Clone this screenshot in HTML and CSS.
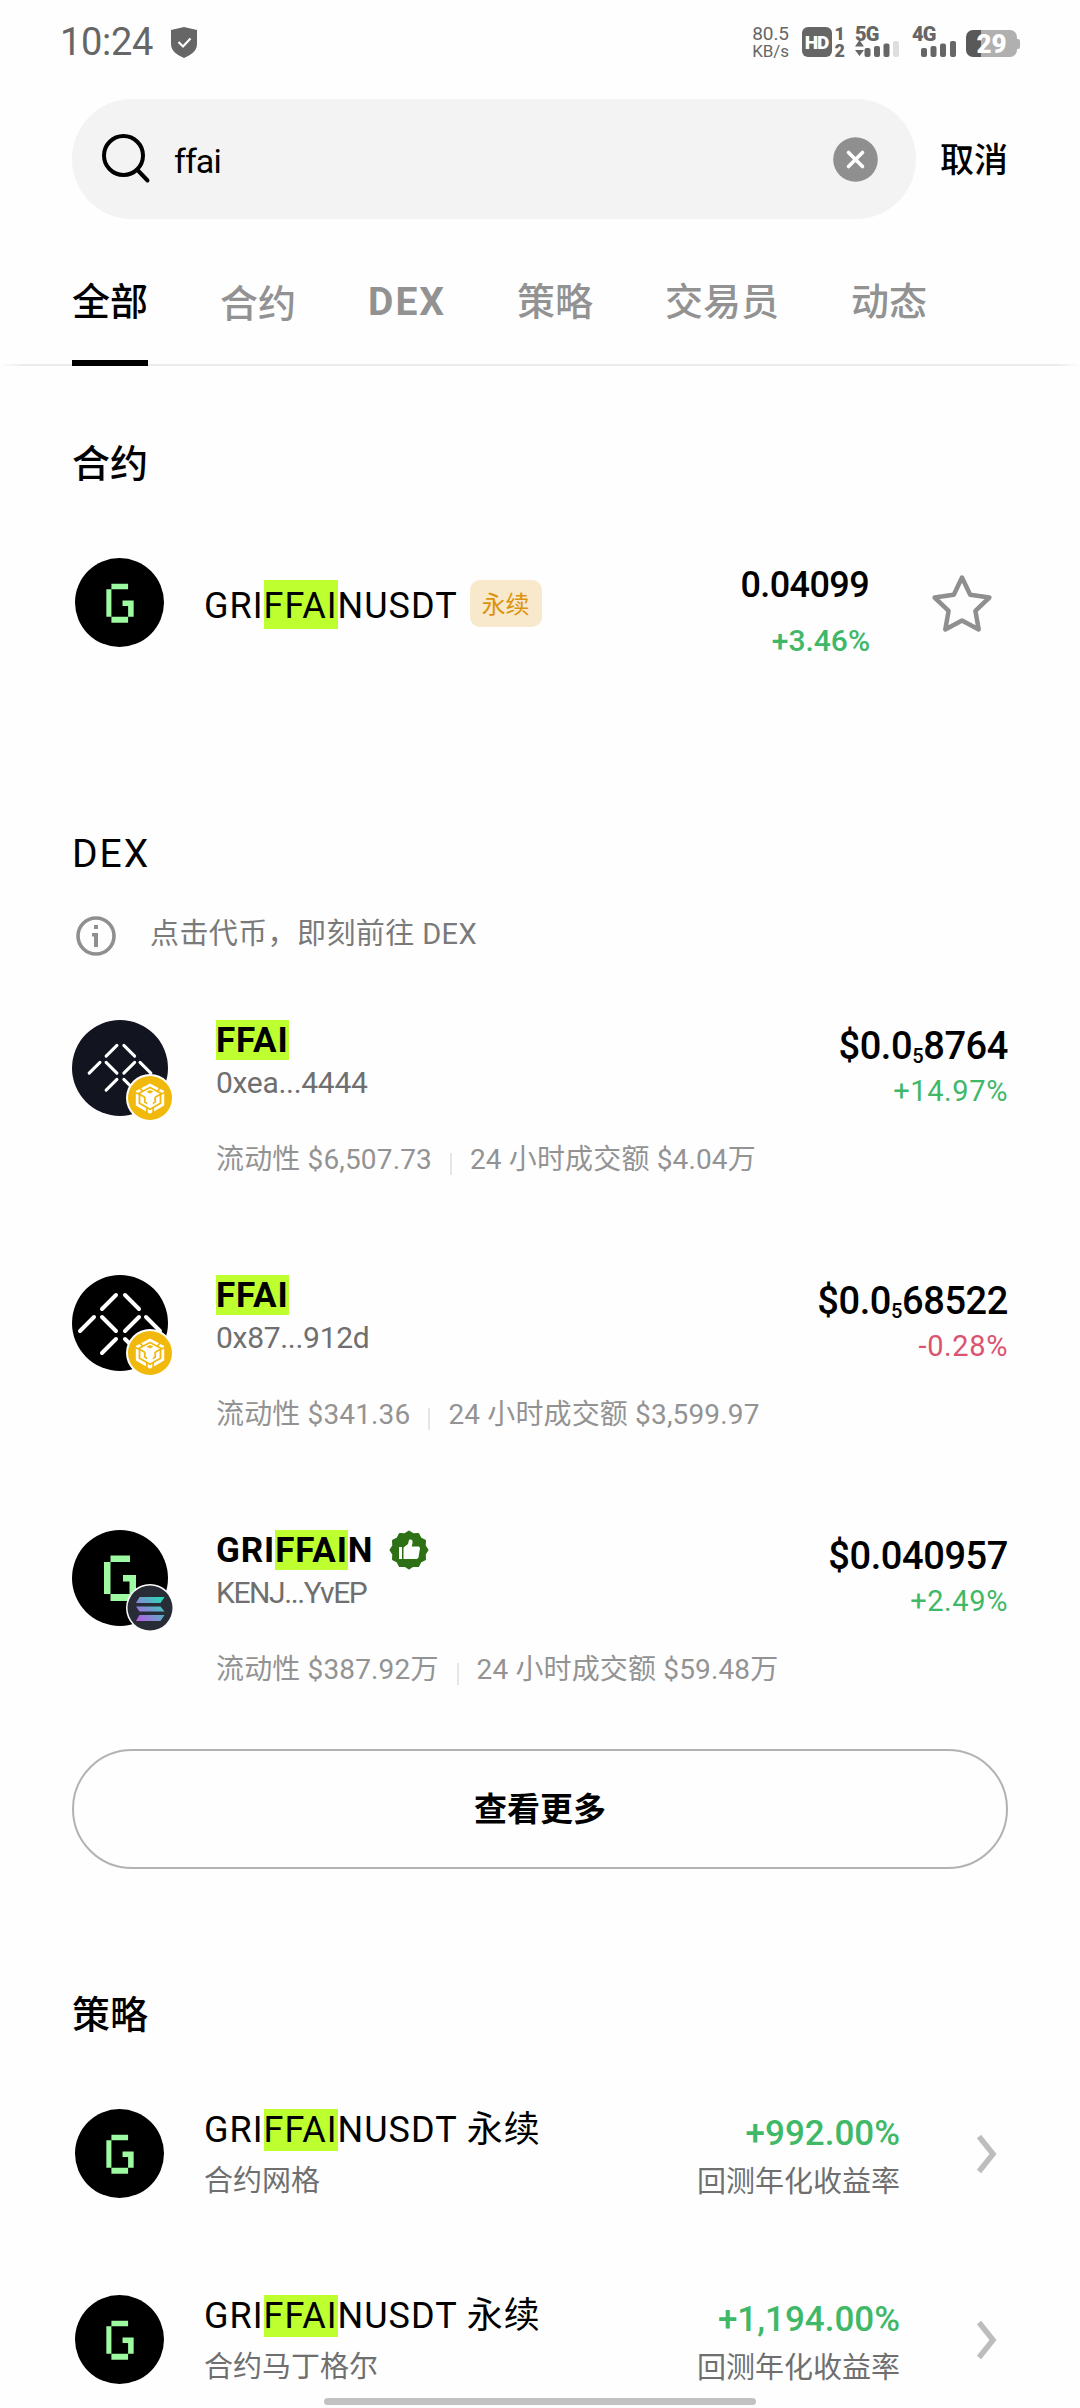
FILE: index.html
```html
<!DOCTYPE html>
<html lang="zh-CN">
<head>
<meta charset="utf-8">
<title>搜索</title>
<link rel="stylesheet" href="styles.css">
</head>
<body>
<svg width="0" height="0" class="defs">
  <defs>
    <linearGradient id="solana" gradientUnits="userSpaceOnUse" x1="11" y1="36" x2="36" y2="12">
      <stop offset="0" stop-color="#b65ce6"/>
      <stop offset="0.5" stop-color="#6f9ccb"/>
      <stop offset="1" stop-color="#22e0b4"/>
    </linearGradient>
    <symbol id="griffain" viewBox="0 0 88 88">
      <circle cx="44" cy="44" r="44" fill="#000"/>
      <path fill="#9dfaa0" d="M36 25.500h16.500v5.500H36zM31 31h5v27h-5zM36 58h16.500v6H36zM47 42h11v16h-5.500V47.500H47z"/>
    </symbol>
    <symbol id="ff" viewBox="0 0 96 96">
      <path fill="none" stroke="#fff" stroke-width="4" stroke-linecap="round" d="M44 20L30 34M53 20l14 14M22 42L8 56M30 42l14 14M67 42L53 56M74 42l14 14M44 64L30 78M53 64l14 14"/>
    </symbol>
    <symbol id="bnb" viewBox="0 0 48 48">
      <circle cx="24" cy="24" r="24" fill="#fff"/>
      <circle cx="24" cy="24" r="22" fill="#f0b90b"/>
      <path fill="#fff" d="M24 9.500L38.200 17v14.500L24 39.800 9.800 31.500V17z"/>
      <g fill="none" stroke="#f0b90b" stroke-width="1.800">
        <path d="M24 13.500L34.500 19v10.300L24 35.300l-10.500-6V19z"/>
        <path d="M9 18.500l5 2 4.800 2.800v4.700l5.200 3M39 18.500l-5 2-4.800 2.800v4.700l-5.200 3"/>
        <path d="M13 13l4 4.500M35 13l-4 4.500M20.800 33v7M27.200 33v7"/>
      </g>
      <path fill="#f0b90b" d="M24 16l3.500 1.800-3.500 1.800-3.500-1.800z"/>
      <path fill="#fff" d="M19.500 20l4.500 2 4.500-2 1.500 1.500-3.200 2.500v8.500L24 34l-2.800-1.500V24L18 21.500z"/>
    </symbol>
    <symbol id="sol" viewBox="0 0 48 48">
      <circle cx="24" cy="24" r="24" fill="#fff"/>
      <circle cx="24" cy="24" r="22.500" fill="#282c37"/>
      <path fill="url(#solana)" d="M13.500 13h25l-4 6h-24.500zM10 22.500h24.500l4 5H13.500zM13.500 31h25l-4 6h-24.500z"/>
    </symbol>
    <symbol id="chevron" viewBox="0 0 24 40">
      <path d="M4 2.500L18 20 4 37.500" fill="none" stroke="#bdbdbd" stroke-width="5.500"/>
    </symbol>
  </defs>
</svg>

<header class="status">
  <span class="clock">10:24</span>
  <svg class="shield" width="26" height="31" viewBox="0 0 26 31"><path d="M13 0l13 3v14c0 7-6 11-13 14C6 28 0 24 0 17V3z" fill="#666"/><path d="M7.500 15l4.500 4.500 7.500-8" fill="none" stroke="#fff" stroke-width="2.200"/></svg>
  <div class="rate"><span>80.5</span><span>KB/s</span></div>
  <div class="hd"><span class="hd-box">HD</span><span class="sims"><b>1</b><b>2</b></span></div>
  <div class="signal signal-5g">
    <b>5G</b>
    <svg width="44" height="17" viewBox="0 0 44 17" fill="#666"><path d="M4.500 0l4.500 6.500H0zM4.500 16l4.500-6H0z"/><rect x="9.500" y="8" width="6" height="9" rx="2"/><rect x="19" y="6" width="6" height="11" rx="2"/><rect x="28.500" y="3.500" width="6" height="13.500" rx="2"/><rect x="38" y="1" width="6" height="16" rx="2" fill="#dedede"/></svg>
  </div>
  <div class="signal signal-4g">
    <b>4G</b>
    <svg width="44" height="17" viewBox="0 0 44 17" fill="#666"><rect x="9" y="8" width="6" height="9" rx="2"/><rect x="18.500" y="6" width="6" height="11" rx="2"/><rect x="28" y="3.500" width="6" height="13.500" rx="2"/><rect x="38" y="1" width="6" height="16" rx="2"/></svg>
  </div>
  <div class="battery"><span>29</span></div>
</header>

<div class="search">
  <div class="field">
    <svg width="50" height="50" viewBox="0 0 50 50" fill="none" stroke="#000" stroke-width="4" stroke-linecap="round"><circle cx="21.500" cy="21.500" r="19.500"/><path d="M35.500 36l10 10.500"/></svg>
    <span class="query">ffai</span>
    <svg class="clear" width="45" height="45" viewBox="0 0 45 45"><circle cx="22.500" cy="22.500" r="22.300" fill="#8f8f8f"/><path d="M15.500 15.500l14 14M29.500 15.500l-14 14" stroke="#fff" stroke-width="3.600" stroke-linecap="round"/></svg>
  </div>
  <span class="cancel">取消</span>
</div>

<nav class="tabs">
  <span class="tab active">全部</span>
  <span class="tab tab-low">合约</span>
  <span class="tab tab-dex">DEX</span>
  <span class="tab">策略</span>
  <span class="tab">交易员</span>
  <span class="tab">动态</span>
</nav>

<main>
  <section class="futures">
    <h2>合约</h2>
    <div class="pair">
      <svg class="coin" width="89" height="89"><use href="#griffain"/></svg>
      <span class="symbol">GRI<mark>FFAI</mark>NUSDT</span>
      <span class="badge">永续</span>
      <div class="quote"><span class="last">0.04099</span><span class="change up">+3.46%</span></div>
      <svg class="star" width="64" height="60" viewBox="0 0 64 60"><path d="M32 4.500l8.200 17.300 19.200 2.700-14 13.300 3.300 18.700L32 47.500 15.300 56.500l3.300-18.700-14-13.300 19.200-2.700z" fill="none" stroke="#8f8f8f" stroke-width="4.500" stroke-linejoin="round"/></svg>
    </div>
  </section>

  <section class="dex">
    <h2 class="latin">DEX</h2>
    <div class="hint">
      <svg width="40" height="40" viewBox="0 0 40 40"><circle cx="20" cy="20" r="18" fill="none" stroke="#8f8f8f" stroke-width="3.600"/><path d="M18 9h4v4h-4zM16 17h6v14h-4V20.500h-2z" fill="#8f8f8f"/></svg>
      <span>点击代币，即刻前往 DEX</span>
    </div>

    <div class="token">
      <div class="logo logo-navy"><svg class="mark-small" width="74" height="74"><use href="#ff"/></svg><svg class="chain" width="48" height="48"><use href="#bnb"/></svg></div>
      <div class="info">
        <div class="name"><mark>FFAI</mark></div>
        <div class="address">0xea...4444</div>
        <div class="stats"><span>流动性 $6,507.73</span><i></i><span>24 小时成交额 $4.04万</span></div>
      </div>
      <div class="price"><span class="usd">$0.0<small>5</small>8764</span><span class="up">+14.97%</span></div>
    </div>

    <div class="token">
      <div class="logo"><svg width="96" height="96"><use href="#ff"/></svg><svg class="chain" width="48" height="48"><use href="#bnb"/></svg></div>
      <div class="info">
        <div class="name"><mark>FFAI</mark></div>
        <div class="address">0x87...912d</div>
        <div class="stats"><span>流动性 $341.36</span><i></i><span>24 小时成交额 $3,599.97</span></div>
      </div>
      <div class="price"><span class="usd">$0.0<small>5</small>68522</span><span class="down">-0.28%</span></div>
    </div>

    <div class="token">
      <div class="logo"><svg width="96" height="96" viewBox="0 0 96 96" fill="#9dfaa0"><path d="M38.500 25.500H58V32H38.500zM32 32h6.500v32H32zM38.500 64H58v7H38.500zM51 45h13v19h-6.500V51.500H51z"/></svg><svg class="chain" width="48" height="48"><use href="#sol"/></svg></div>
      <div class="info">
        <div class="name">GRI<mark>FFAI</mark>N<svg class="liked" width="40" height="40" viewBox="0 0 40 40"><path fill="#2d7016" stroke="#2d7016" stroke-width="2" stroke-linejoin="round" d="M20 1.500L24.220 4.260 29.250 4 31.530 8.470 36 10.750 35.740 15.780 38.500 20 35.740 24.220 36 29.250 31.530 31.530 29.250 36 24.220 35.740 20 38.500 15.780 35.740 10.750 36 8.470 31.530 4 29.250 4.260 24.220 1.500 20 4.260 15.780 4 10.750 8.470 8.470 10.750 4 15.780 4.260z"/><path fill="#fff" d="M10 17h3v12h-3zM14.500 17.500L19 14l1-4c2.500-1.200 4 .3 3.500 3l-.8 3.500H30l1 1.500-1.500 9.500-1.500 1.500H14.500z"/></svg></div>
        <div class="address address-tight">KENJ...YvEP</div>
        <div class="stats"><span>流动性 $387.92万</span><i></i><span>24 小时成交额 $59.48万</span></div>
      </div>
      <div class="price"><span class="usd">$0.040957</span><span class="up">+2.49%</span></div>
    </div>

    <div class="more">查看更多</div>
  </section>

  <section class="strategies">
    <h2>策略</h2>
    <div class="strategy">
      <svg class="coin" width="89" height="89"><use href="#griffain"/></svg>
      <div class="what"><span class="symbol">GRI<mark>FFAI</mark>NUSDT 永续</span><span class="kind">合约网格</span></div>
      <div class="yield"><span class="up">+992.00%</span><span class="kind">回测年化收益率</span></div>
      <svg class="go" width="24" height="40"><use href="#chevron"/></svg>
    </div>
    <div class="strategy">
      <svg class="coin" width="89" height="89"><use href="#griffain"/></svg>
      <div class="what"><span class="symbol">GRI<mark>FFAI</mark>NUSDT 永续</span><span class="kind">合约马丁格尔</span></div>
      <div class="yield"><span class="up">+1,194.00%</span><span class="kind">回测年化收益率</span></div>
      <svg class="go" width="24" height="40"><use href="#chevron"/></svg>
    </div>
  </section>
</main>
<div class="home-bar"></div>
</body>
</html>
```

FILE: styles.css
```css
* { box-sizing: border-box; }

body {
  position: relative;
  width: 1080px;
  height: 2408px;
  margin: 0;
  overflow: hidden;
  background: #fefefe;
  color: #000;
  font-family: Roboto, "Noto Sans CJK SC", sans-serif;
  white-space: nowrap;
}

svg { display: block; flex: none; }
.defs { position: absolute; }
mark { background: #bdff2f; color: inherit; }
.up { color: #3fb868; }
.down { color: #da5470; }

/* Status bar */
.status {
  display: flex;
  align-items: flex-start;
  height: 99px;
  padding: 27px 60px 0 60px;
  color: #666;
}
.clock { width: 94px; font-size: 38px; line-height: 31px; letter-spacing: -0.3px; }
.shield { margin-left: 17px; }
.rate {
  display: flex;
  flex-direction: column;
  align-items: center;
  width: 38px;
  margin-left: auto;
  font-size: 19px;
  line-height: 14px;
  letter-spacing: -0.1px;
}
.rate span:last-child { margin-top: 3px; font-size: 17px; }
.hd { display: flex; gap: 3px; margin-left: 12px; }
.hd-box {
  width: 30px;
  height: 30px;
  border-radius: 6px;
  background: #666;
  color: #fff;
  font-size: 19px;
  font-weight: 900;
  line-height: 31px;
  text-align: center;
  letter-spacing: -1px;
}
.sims { display: flex; flex-direction: column; gap: 4px; font-size: 18px; line-height: 13px; }
.sims b { font-weight: 900; }
.signal { display: flex; flex-direction: column; width: 44px; height: 30px; font-size: 20px; }
.signal b { height: 13px; font-weight: 900; line-height: 14px; letter-spacing: -0.8px; }
.signal-5g { margin-left: 10px; }
.signal-4g { margin-left: 13px; }
.battery {
  position: relative;
  width: 51px;
  height: 27px;
  margin: 3px 3px 0 10px;
  border-radius: 7px;
  background: linear-gradient(90deg, #595959 15px, #b0b0b0 15px);
  color: #fff;
  font-size: 26px;
  font-weight: 900;
  line-height: 28px;
  text-align: center;
}
.battery::after {
  content: "";
  position: absolute;
  top: 9px;
  right: -3px;
  width: 3px;
  height: 10px;
  border-radius: 0 2px 2px 0;
  background: #b0b0b0;
}

/* Search */
.search { display: flex; align-items: center; padding-left: 72px; }
.field {
  display: flex;
  align-items: center;
  width: 844px;
  height: 120px;
  padding: 0 38px 0 30px;
  border-radius: 60px;
  background: #f3f3f3;
}
.query { margin-left: 22px; padding-top: 3px; font-size: 34px; line-height: 50px; letter-spacing: -0.9px; }
.clear { margin-left: auto; }
.cancel { margin-left: 24px; padding-top: 2px; font-size: 34px; font-weight: 500; line-height: 50px; }

/* Tabs */
.tabs {
  display: flex;
  gap: 72px;
  height: 147px;
  padding: 59px 72px 0;
  background: linear-gradient(90deg, transparent, #ebebeb 24px, #ebebeb 1056px, transparent) 0 100% / 100% 2px no-repeat;
}
.tab {
  height: 88px;
  color: #929292;
  font-size: 38px;
  font-weight: 500;
  line-height: 48px;
}
.tab.active { border-bottom: 6px solid #000; color: #000; }
.tab-low { padding-top: 2px; }
.tab-dex { width: 77px; font-weight: 700; font-size: 39px; letter-spacing: 2px; }

/* Sections */
section { padding: 0 72px; }
h2 { margin: 0; font-size: 38px; font-weight: 500; line-height: 48px; }
.futures { padding-top: 74px; }
.dex { padding-top: 183px; }
.strategies { padding-top: 122px; }
.latin { font-weight: 400; font-size: 39px; letter-spacing: 2px; }

.pair { display: flex; height: 89px; margin-top: 70px; padding-left: 3px; }
.symbol { font-size: 36px; letter-spacing: 1px; }
.pair .symbol { margin-left: 40px; padding-top: 26px; line-height: 44px; }
.pair mark { padding: 5px 0 2px; }
.badge {
  width: 72px;
  height: 47px;
  margin: 22px 0 0 12px;
  border-radius: 10px;
  background: #f8e8cc;
  color: #dc930c;
  font-size: 24px;
  line-height: 50px;
  text-align: center;
}
.quote { display: flex; flex-direction: column; align-items: flex-end; margin-left: auto; padding-top: 5px; }
.last { padding-right: 1px; font-size: 36px; font-weight: 500; line-height: 44px; letter-spacing: -0.6px; }
.change { margin-top: 16px; font-size: 30px; font-weight: 500; line-height: 36px; }
.star { margin: 15px 14px 0 60px; }

.hint {
  display: flex;
  align-items: center;
  height: 40px;
  margin-top: 36px;
  padding-left: 4px;
  color: #7a7a7a;
  font-size: 29px;
  line-height: 40px;
  letter-spacing: 0.4px;
}
.hint svg { margin: 4px 34px 0 0; }

.token { display: flex; height: 180px; margin-top: 75px; }
.hint + .token { margin-top: 66px; }
.logo {
  position: relative;
  width: 96px;
  height: 96px;
  border-radius: 50%;
  background: #000;
}
.logo-navy { background: #12151f; }
.mark-small { margin: 10px 0 0 11px; }
.chain { position: absolute; left: 54px; top: 54px; }
.info { margin-left: 48px; }
.name { display: flex; font-size: 35px; font-weight: 700; line-height: 41px; letter-spacing: 0.9px; height: 40px; }
.liked { margin-left: 16px; }
.address { margin-top: 3px; color: #6f6f6f; font-size: 30px; line-height: 40px; letter-spacing: -0.3px; }
.address-tight { letter-spacing: -1.400px; }
.stats { display: flex; margin-top: 37px; color: #939393; font-size: 28px; line-height: 40px; letter-spacing: 0.15px; }
.stats i { width: 2px; height: 22px; margin: 13px 18px 0; background: #e6e6e6; }
.price { display: flex; flex-direction: column; align-items: flex-end; margin-left: auto; padding-top: 4px; }
.usd { font-size: 38px; font-weight: 500; line-height: 44px; letter-spacing: -0.4px; }
.usd small { position: relative; top: 4px; font-size: 20px; line-height: 0; }
.price .up, .price .down { margin-top: 5px; font-size: 29px; line-height: 36px; letter-spacing: 0.6px; }

.more {
  height: 120px;
  margin-top: 39px;
  border: 2px solid #b2b2b2;
  border-radius: 60px;
  font-size: 33px;
  font-weight: 700;
  line-height: 118px;
  text-align: center;
}

.strategy { display: flex; height: 89px; margin-top: 97px; padding-left: 3px; }
h2 + .strategy { margin-top: 70px; }
.what, .yield { display: flex; flex-direction: column; }
.what { margin: -1px 0 0 40px; }
.what .symbol { line-height: 44px; }
.kind { margin-top: 12px; color: #6f6f6f; font-size: 29px; line-height: 34px; }
.yield { align-items: flex-end; margin-left: auto; padding-top: 5px; }
.yield .kind { margin-top: 11px; }
.yield .up { font-size: 35px; font-weight: 500; line-height: 40px; }
.go { margin: 25px 9px 0 75px; }

.home-bar {
  position: absolute;
  left: 324px;
  top: 2398px;
  width: 432px;
  height: 7px;
  border-radius: 4px;
  background: #c2c2c2;
}
```
